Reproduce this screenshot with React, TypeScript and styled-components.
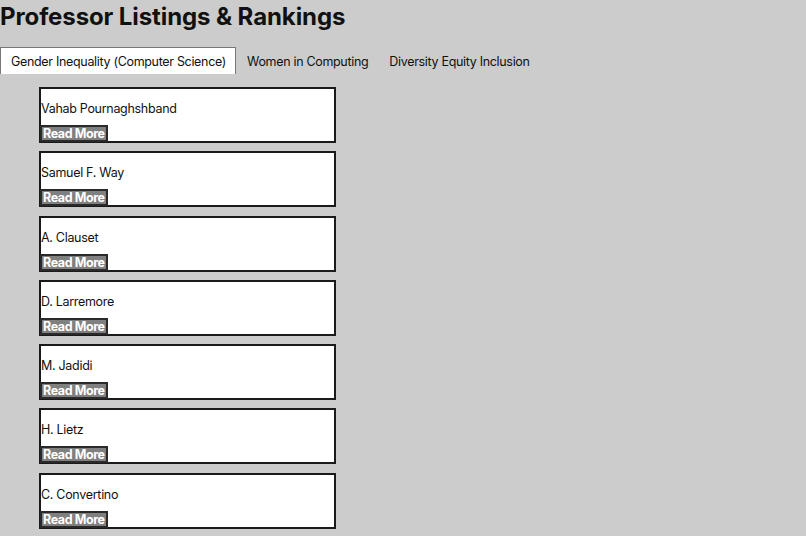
import styled, { createGlobalStyle } from "styled-components";

const GlobalStyle = createGlobalStyle`
    body {
        margin: 0;
        background-color: #cccccc;
        font-family: Inter, "Noto Sans", "Liberation Sans", sans-serif;
        color: #111;
    }
`

const Page = styled.div`
    display: flex;
    flex-direction: column;
`

const Title = styled.h1`
    margin: 0;
    padding-top: 2px;
    font-size: 24px;
    font-weight: 700;
    line-height: 30px;
    letter-spacing: -0.1px;
    color: #111;
`

const TabBar = styled.div`
    display: flex;
    align-items: flex-end;
    margin-top: 15px;
    height: 27px;
`

const Tab = styled.button<{ $active?: boolean }>`
    height: 27px;
    padding: 0 9px 0 10px;
    font-family: inherit;
    font-size: 12.5px;
    letter-spacing: -0.32px;
    color: #111;
    cursor: pointer;
    background-color: ${(p) => (p.$active ? "#ffffff" : "transparent")};
    border: 1px solid ${(p) => (p.$active ? "#777" : "transparent")};
    border-bottom: none;
`

const CardList = styled.div`
    display: flex;
    flex-direction: column;
    gap: 8.3px;
    padding: 13px 0 0 39px;
`

const Card = styled.div`
    width: 297px;
    height: 56px;
    box-sizing: border-box;
    background-color: #ffffff;
    border: 2px solid #1a1a1a;
    display: flex;
    flex-direction: column;
    justify-content: space-between;
`

const Name = styled.p`
    margin: 12px 0 0 0;
    font-size: 12.5px;
    letter-spacing: -0.3px;
    line-height: 16px;
    color: #111;
`

const ReadMore = styled.button`
    align-self: flex-start;
    margin-left: -1px;
    margin-bottom: -1px;
    padding: 0 1px;
    height: 17px;
    background-color: #808080;
    color: #ffffff;
    border: 2px solid #2a2a2a;
    font-family: inherit;
    font-size: 12.5px;
    font-weight: 700;
    letter-spacing: -0.4px;
    line-height: 13px;
    cursor: pointer;
`

const professors = [
    "Vahab Pournaghshband",
    "Samuel F. Way",
    "A. Clauset",
    "D. Larremore",
    "M. Jadidi",
    "H. Lietz",
    "C. Convertino",
]

const tabs = [
    "Gender Inequality (Computer Science)",
    "Women in Computing",
    "Diversity Equity Inclusion",
]

function App() {
    return (
        <Page>
            <GlobalStyle />
            <Title>Professor Listings &amp; Rankings</Title>
            <TabBar>
                {tabs.map((t, i) => (
                    <Tab key={t} $active={i === 0}>{t}</Tab>
                ))}
            </TabBar>
            <CardList>
                {professors.map((name) => (
                    <Card key={name}>
                        <Name>{name}</Name>
                        <ReadMore>Read More</ReadMore>
                    </Card>
                ))}
            </CardList>
        </Page>
    );
}

export default App;
